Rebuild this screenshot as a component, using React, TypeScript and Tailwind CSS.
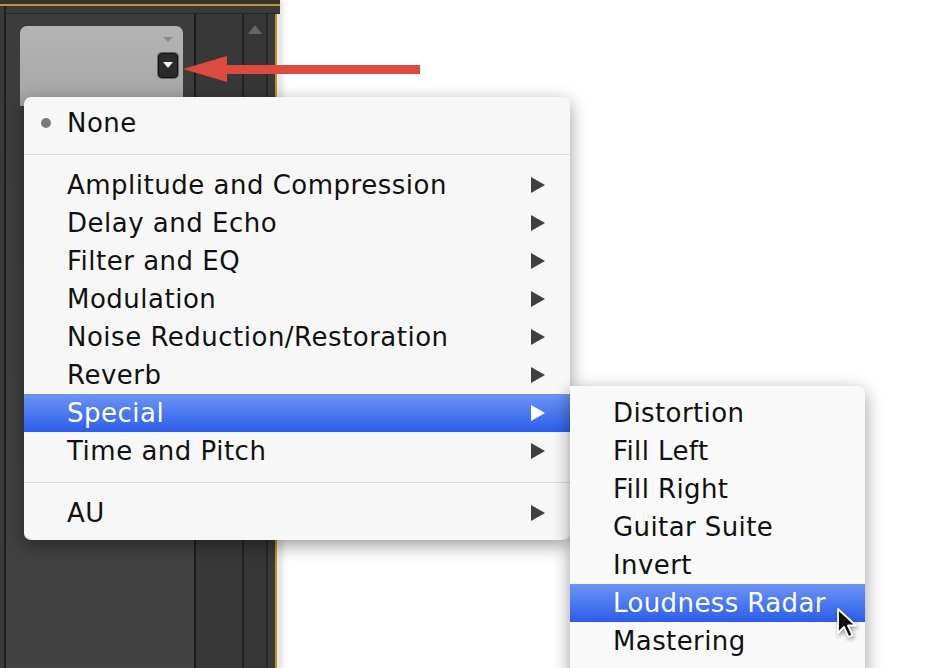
import React from 'react';

const mainItems = [
  'Amplitude and Compression',
  'Delay and Echo',
  'Filter and EQ',
  'Modulation',
  'Noise Reduction/Restoration',
  'Reverb',
  'Special',
  'Time and Pitch',
];

const subItems = [
  'Distortion',
  'Fill Left',
  'Fill Right',
  'Guitar Suite',
  'Invert',
  'Loudness Radar',
  'Mastering',
  'Vocal Enhancer',
];

function SubArrow({ white }: { white?: boolean }) {
  return (
    <svg width="16" height="18" viewBox="0 0 16 18" className="shrink-0">
      <polygon points="1,1 15,9 1,17" fill={white ? '#ffffff' : '#3f3f3f'} />
    </svg>
  );
}

function Separator() {
  return (
    <div className="h-6 flex items-center">
      <div className="h-px w-full bg-[#dcdcdc]" />
    </div>
  );
}

function MenuRow({ label, active, arrow }: { label: string; active?: boolean; arrow?: boolean }) {
  return (
    <div
      className={
        active
          ? 'h-[38px] flex items-center pl-[43px] pr-[24px] bg-gradient-to-b from-[#6d93f4] to-[#2c5ce9] text-white'
          : 'h-[38px] flex items-center pl-[43px] pr-[24px] text-[#111]'
      }
    >
      <span className="flex-1 whitespace-nowrap">{label}</span>
      {arrow && <SubArrow white={active} />}
    </div>
  );
}

function Cursor() {
  return (
    <svg width="26" height="34" viewBox="0 0 26 34" className="drop-shadow-[1px_2px_2px_rgba(0,0,0,0.4)]">
      <path
        d="M2 2 L2 26 L8 20 L12.5 30 L16.5 28.2 L12 18.5 L20 18.5 Z"
        fill="#111"
        stroke="#fff"
        strokeWidth="1.8"
        strokeLinejoin="round"
      />
    </svg>
  );
}

export default function App() {
  return (
    <div
      className="relative w-[946px] h-[668px] overflow-hidden bg-white"
      style={{ fontFamily: '"DejaVu Sans", "Liberation Sans", sans-serif' }}
    >
      <div className="flex h-full">
        {/* dark effects rack */}
        <div className="w-[280px] h-full flex flex-col bg-[#2e2e2e] shadow-[2px_0_6px_rgba(0,0,0,0.15)]">
          <div className="h-[4px] bg-[#333]" />
          <div className="flex-1 flex border-t-2 border-[#c88f22]">
            <div className="w-[4px] bg-[#3a3a3a]" />
            <div className="flex-1 flex flex-col border-l-2 border-[#1e1e1e]">
              <div className="h-[8px] bg-[#3a3a3a] border-b border-[#262626]" />
              <div className="flex-1 flex">
                <div className="w-[188px] bg-gradient-to-b from-[#3c3c3c] to-[#424242] pl-[14px] pt-[12px]">
                  <div className="w-[163px] h-[80px] rounded-t-[7px] bg-gradient-to-b from-[#b4b4b4] to-[#a6a6a6] flex flex-col items-end pr-[4px] pt-[10px]">
                    <svg width="12" height="8" viewBox="0 0 12 8" className="mr-[5px]">
                      <polygon points="1,1 11,1 6,6" fill="#8c8c8c" />
                    </svg>
                    <div className="mt-[9px] mr-[1px] w-[20px] h-[25px] rounded-[4px] bg-[#2a2a2a] border border-[#111] shadow-[0_0_0_1px_#6a6a6a] flex items-center justify-center">
                      <svg width="10" height="7" viewBox="0 0 10 7">
                        <polygon points="0,0 10,0 5,6" fill="#f2f2f2" />
                      </svg>
                    </div>
                  </div>
                </div>
                <div className="w-[2px] bg-[#1c1c1c]" />
                <div className="w-[46px] bg-[#383838]" />
                <div className="w-[2px] bg-[#222]" />
                <div className="w-[22px] bg-[#363636] flex justify-center pt-[11px]">
                  <svg width="14" height="9" viewBox="0 0 14 9">
                    <polygon points="7,0 14,9 0,9" fill="#666" />
                  </svg>
                </div>
                <div className="w-[2px] bg-[#262626]" />
                <div className="w-[7px] bg-[#3a3a3a]" />
                <div className="w-[2px] bg-[#c88f22]" />
                <div className="w-[3px] bg-[#e8e8e8]" />
              </div>
            </div>
          </div>
        </div>
        <div className="flex-1" />
      </div>

      {/* red annotation arrow */}
      <svg className="absolute left-[180px] top-[54px]" width="245" height="32" viewBox="0 0 245 32">
        <polygon points="3,15 47,2 47,11 240,11 240,20 47,20 47,28" fill="#dc4c3e" />
      </svg>

      {/* main menu */}
      <div className="absolute left-[24px] top-[97px] w-[546px] rounded-[7px] bg-[#f7f7f7] shadow-[0_5px_18px_rgba(0,0,0,0.4)] text-[26px] tracking-[0.5px] pt-[7px] pb-[8px]">
        <div className="h-[38px] flex items-center text-[#111]">
          <span className="w-[43px] flex justify-center pl-[1px]">
            <span className="w-[10px] h-[10px] rounded-full bg-[#7a7a7a]" />
          </span>
          <span>None</span>
        </div>
        <Separator />
        {mainItems.map((item) => (
          <MenuRow key={item} label={item} active={item === 'Special'} arrow />
        ))}
        <Separator />
        <MenuRow label="AU" arrow />
      </div>

      {/* submenu */}
      <div className="absolute left-[570px] top-[386px] w-[295px] h-[320px] rounded-tr-[7px] bg-[#f9f9f9] shadow-[0_5px_18px_rgba(0,0,0,0.4)] text-[26px] tracking-[0.4px] pt-[8px]">
        {subItems.map((item) => (
          <div
            key={item}
            className={
              item === 'Loudness Radar'
                ? 'h-[38px] flex items-center pl-[43px] bg-gradient-to-b from-[#6d93f4] to-[#2c5ce9] text-white whitespace-nowrap'
                : 'h-[38px] flex items-center pl-[43px] text-[#111] whitespace-nowrap'
            }
          >
            {item}
          </div>
        ))}
      </div>

      <div className="absolute left-[836px] top-[607px]">
        <Cursor />
      </div>
    </div>
  );
}
